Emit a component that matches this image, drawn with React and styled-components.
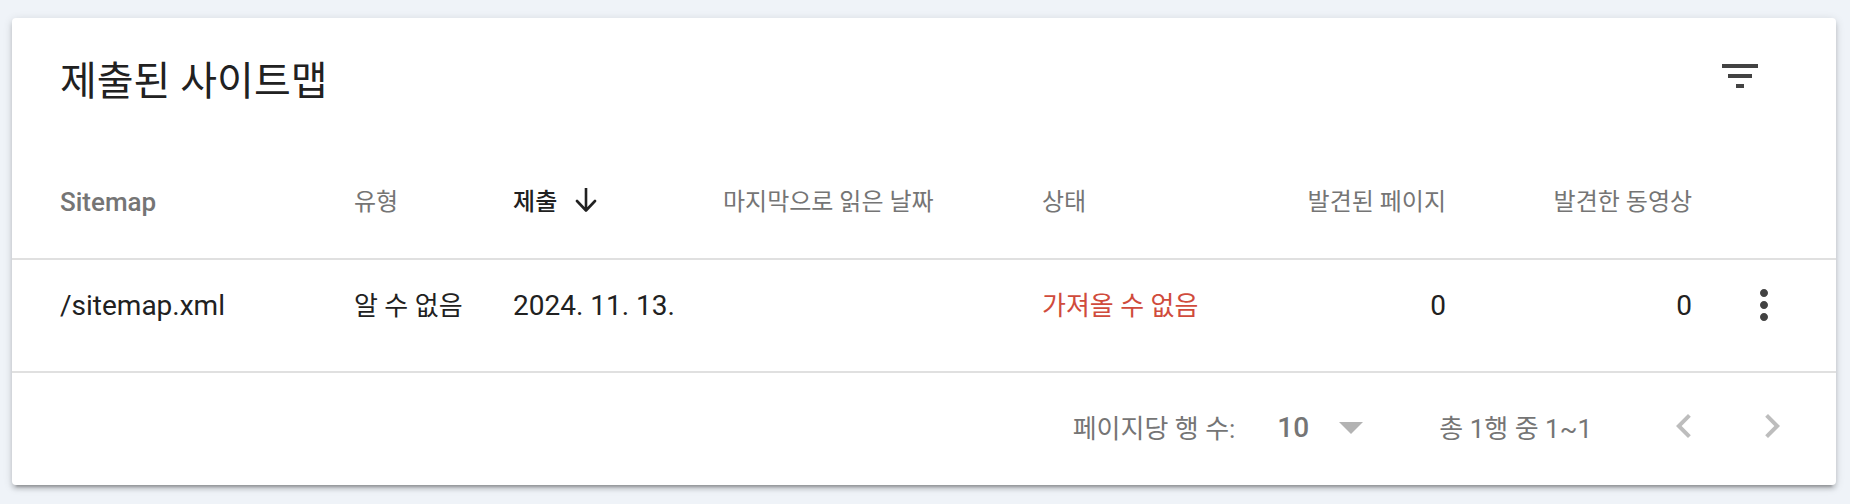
import React from "react";
import styled, { createGlobalStyle } from "styled-components";

const GlobalStyle = createGlobalStyle`
  *, *::before, *::after { box-sizing: border-box; }
  body {
    margin: 0;
    background: #eff3f8;
    color: #212121;
    font-family: Roboto, "Noto Sans CJK KR", sans-serif;
    font-size: 26px;
  }
`;

const Page = styled.main`
  padding: 18px 14px 19px 12px;
`;

const Card = styled.section`
  background: #fff;
  border-radius: 4px;
  box-shadow: 0 4px 4px rgba(0, 0, 0, 0.14), 0 6px 2px -4px rgba(0, 0, 0, 0.2),
    0 2px 10px rgba(0, 0, 0, 0.14);
`;

const CardHeader = styled.header`
  display: flex;
  align-items: center;
  justify-content: space-between;
  height: 126px;
  padding: 0 72px 10px 48px;
`;

const Title = styled.h2`
  margin: 0;
  padding-top: 12px;
  font-size: 40px;
  font-weight: 400;
  line-height: 56px;
`;

const IconButton = styled.button`
  display: block;
  width: 48px;
  height: 48px;
  padding: 0;
  border: 0;
  background: none;
  color: ${({ $color }) => $color || "#424242"};

  svg {
    display: block;
    width: 48px;
    height: 48px;
    fill: currentColor;
  }
`;

const Table = styled.table`
  width: 100%;
  table-layout: fixed;
  border-collapse: separate;
  border-spacing: 0;
`;

const Col = styled.col`
  width: ${({ $width }) => $width};
`;

const HeadCell = styled.th`
  height: 116px;
  padding: 2px 0 0;
  border-bottom: 2px solid #e0e0e0;
  color: ${({ $active }) => ($active ? "#212121" : "#757575")};
  font-size: ${({ $latin }) => ($latin ? "26px" : "24px")};
  font-weight: ${({ $active, $latin }) => ($active || $latin ? 500 : 400)};
  line-height: 40px;
  text-align: ${({ $end }) => ($end ? "right" : "left")};
  white-space: nowrap;

  &:first-child { padding-left: 48px; }
`;

const SortButton = styled.button`
  display: flex;
  align-items: center;
  gap: 16px;
  padding: 0;
  border: 0;
  background: none;
  color: inherit;
  font: inherit;

  svg {
    width: 24px;
    height: 28px;
    fill: none;
    stroke: currentColor;
    stroke-width: 2.6;
    stroke-linecap: round;
    stroke-linejoin: round;
  }
`;

const Cell = styled.td`
  height: 113px;
  padding: 25px 0 0;
  border-bottom: 2px solid #e0e0e0;
  color: ${({ $error }) => ($error ? "#d04b3c" : "#212121")};
  font-size: ${({ $latin }) => ($latin ? "28px" : "26px")};
  line-height: 42px;
  text-align: ${({ $end }) => ($end ? "right" : "left")};
  vertical-align: top;
  white-space: nowrap;

  &:first-child { padding-left: 48px; }
`;

const ActionCell = styled(Cell)`
  padding-top: 21px;

  ${IconButton} { margin: 0 auto; }
`;

const Footer = styled.footer`
  display: flex;
  align-items: center;
  justify-content: flex-end;
  height: 112px;
  padding: 0 40px 6px 48px;
  color: #757575;
`;

const SelectBox = styled.div`
  position: relative;
  margin: 0 76px 0 42px;

  svg {
    position: absolute;
    right: 0;
    top: 17px;
    width: 24px;
    height: 12px;
    fill: #b3b3b3;
    pointer-events: none;
  }
`;

const Select = styled.select`
  display: block;
  appearance: none;
  width: 86px;
  height: 42px;
  padding: 4px 0 0;
  border: 0;
  background: none;
  color: #757575;
  font: 500 28px/38px Roboto, "Noto Sans CJK KR", sans-serif;
`;

const Pager = styled.nav`
  display: flex;
  gap: 40px;
  margin-left: 68px;
`;

const columns = [
  { label: "Sitemap", width: "18.75%", latin: true },
  { label: "유형", width: "8.72%" },
  { label: "제출", width: "11.51%", active: true },
  { label: "마지막으로 읽은 날짜", width: "17.49%" },
  { label: "상태", width: "9.32%" },
  { label: "발견된 페이지", width: "12.83%", end: true },
  { label: "발견한 동영상", width: "13.49%", end: true },
];

const Icon = ({ d }) => (
  <svg viewBox="0 0 24 24" aria-hidden="true">
    <path d={d} />
  </svg>
);

export default function App() {
  return (
    <>
      <GlobalStyle />
      <Page>
        <Card>
          <CardHeader>
            <Title>제출된 사이트맵</Title>
            <IconButton type="button" aria-label="필터">
              <Icon d="M10 18h4v-2h-4v2zM3 6v2h18V6H3zm3 7h12v-2H6v2z" />
            </IconButton>
          </CardHeader>
          <Table>
            <colgroup>
              {columns.map((c) => (
                <Col key={c.label} $width={c.width} />
              ))}
              <Col $width="auto" />
            </colgroup>
            <thead>
              <tr>
                {columns.map((c) => (
                  <HeadCell
                    key={c.label}
                    scope="col"
                    aria-sort={c.active ? "descending" : undefined}
                    $active={c.active}
                    $latin={c.latin}
                    $end={c.end}
                  >
                    {c.active ? (
                      <SortButton type="button">
                        {c.label}
                        <svg viewBox="0 0 24 28" aria-hidden="true">
                          <path d="M13 0v22M4 13l9 9.500 9-9.500" />
                        </svg>
                      </SortButton>
                    ) : (
                      c.label
                    )}
                  </HeadCell>
                ))}
                <HeadCell as="td" />
              </tr>
            </thead>
            <tbody>
              <tr>
                <Cell $latin>/sitemap.xml</Cell>
                <Cell>알 수 없음</Cell>
                <Cell $latin>2024. 11. 13.</Cell>
                <Cell />
                <Cell $error>가져올 수 없음</Cell>
                <Cell $latin $end>0</Cell>
                <Cell $latin $end>0</Cell>
                <ActionCell>
                  <IconButton type="button" aria-label="옵션 더보기">
                    <Icon d="M12 8c1.100 0 2-.9 2-2s-.9-2-2-2-2 .9-2 2 .9 2 2 2zm0 2c-1.100 0-2 .9-2 2s.9 2 2 2 2-.9 2-2-.9-2-2-2zm0 6c-1.100 0-2 .9-2 2s.9 2 2 2 2-.9 2-2-.9-2-2-2z" />
                  </IconButton>
                </ActionCell>
              </tr>
            </tbody>
          </Table>
          <Footer>
            <label htmlFor="rows">페이지당 행 수:</label>
            <SelectBox>
              <Select id="rows" defaultValue="10">
                <option>10</option>
                <option>25</option>
                <option>50</option>
              </Select>
              <svg viewBox="0 0 24 12" aria-hidden="true">
                <path d="M0 0h24L12 12z" />
              </svg>
            </SelectBox>
            <span>총 1행 중 1~1</span>
            <Pager aria-label="페이지 이동">
              <IconButton type="button" aria-label="이전" $color="#bdbdbd">
                <Icon d="M15.410 7.410L14 6l-6 6 6 6 1.410-1.410L10.830 12z" />
              </IconButton>
              <IconButton type="button" aria-label="다음" $color="#bdbdbd">
                <Icon d="M10 6L8.590 7.410 13.170 12l-4.580 4.590L10 18l6-6z" />
              </IconButton>
            </Pager>
          </Footer>
        </Card>
      </Page>
    </>
  );
}
